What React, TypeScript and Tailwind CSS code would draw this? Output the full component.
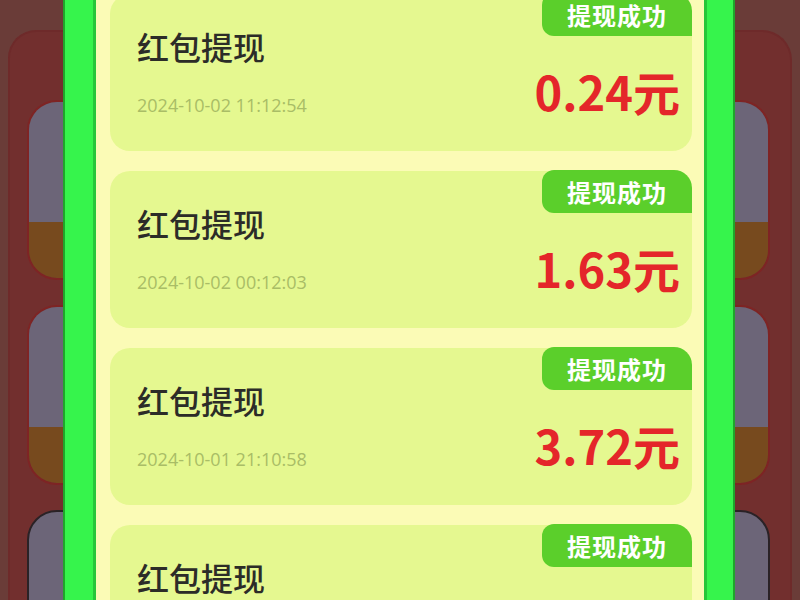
import React from "react";

const records = [
  { date: "2024-10-02 11:12:54", amount: "0.24" },
  { date: "2024-10-02 00:12:03", amount: "1.63" },
  { date: "2024-10-01 21:10:58", amount: "3.72" },
  { date: "2024-10-01 20:45:17", amount: "2.18" },
];

function Pill({ mt }: { mt: string }) {
  return (
    <div className={`${mt} w-[70px] h-[180px] shrink-0 rounded-[30px] border-2 border-[#7e2424] overflow-hidden flex flex-col`}>
      <div className="h-[120px] bg-[#6c6578]" />
      <div className="flex-1 bg-[#774a1e]" />
    </div>
  );
}

function SideLeft() {
  return (
    <div className="w-[63px] h-full overflow-hidden bg-[#6a3c38] shrink-0">
      <div className="ml-[8px] mt-[30px] w-[120px] h-[620px] rounded-tl-[28px] bg-[#722f2e] border-l-2 border-t-2 border-[#6e2a2a] pl-[17px] pt-[68px] flex flex-col">
        <Pill mt="mt-0" />
        <Pill mt="mt-[25px]" />
        <div className="mt-[25px] w-[70px] h-[182px] shrink-0 rounded-[30px] border-2 border-[#2a2226] bg-[#6c6578]" />
      </div>
    </div>
  );
}

function SideRight() {
  return (
    <div className="flex-1 h-full overflow-hidden bg-[#6a3c38] flex justify-end">
      <div className="mt-[30px] mr-[8px] w-[120px] h-[620px] shrink-0 rounded-tr-[30px] bg-[#722f2e] border-r-2 border-t-2 border-[#6e2a2a] pr-[20px] pt-[68px] flex flex-col items-end">
        <Pill mt="mt-0" />
        <Pill mt="mt-[25px]" />
        <div className="mt-[25px] w-[70px] h-[182px] shrink-0 rounded-[30px] border-2 border-[#2a2226] bg-[#6c6578]" />
      </div>
    </div>
  );
}

function Card({ date, amount, first }: { date: string; amount: string; first?: boolean }) {
  return (
    <div className={`${first ? "mt-[-6px]" : ""} relative h-[157px] shrink-0 rounded-[20px] bg-[#e5f890] flex justify-between`}>
      <div className="absolute top-[-1px] right-0 w-[150px] h-[43px] bg-[#5bcf2b] rounded-tl-[12px] rounded-bl-[12px] rounded-tr-[18px] flex items-center justify-center">
        <span className="text-white text-[24px] font-bold tracking-[1px] leading-none" style={{ fontFamily: '"Noto Sans CJK SC", sans-serif' }}>
          提现成功
        </span>
      </div>
      <div className="pl-[27px] pt-[33px] flex flex-col">
        <span className="text-[32px] leading-[38px] font-medium text-[#2c2c28]" style={{ fontFamily: '"Noto Sans CJK SC", sans-serif' }}>
          红包提现
        </span>
        <span className="mt-[28px] text-[18px] leading-[24px] font-medium text-[#a9bd66]" style={{ fontFamily: '"Open Sans", "Noto Sans", sans-serif' }}>
          {date}
        </span>
      </div>
      <div className="pr-[12px] pt-[69px]">
        <span className="text-[47px] leading-[56px] font-bold text-[#e4262a]" style={{ fontFamily: '"Noto Sans CJK SC", sans-serif' }}>
          {amount}元
        </span>
      </div>
    </div>
  );
}

export default function App() {
  return (
    <div className="w-[800px] h-[600px] overflow-hidden flex bg-[#6a3c38]">
      <SideLeft />
      <div className="w-[33px] h-full shrink-0 bg-[#36f44c] border-l-[2px] border-l-[#1fa52b] border-r-[3px] border-r-[#27c63a]" />
      <div className="w-[608px] h-full shrink-0 bg-[#fbfbb6] overflow-hidden pl-[14px] pr-[12px] flex flex-col gap-[20px]">
        {records.map((r, i) => (
          <Card key={i} date={r.date} amount={r.amount} first={i === 0} />
        ))}
      </div>
      <div className="w-[31px] h-full shrink-0 bg-[#36f44c] border-l-[3px] border-l-[#27c63a] border-r-[2px] border-r-[#1fa52b]" />
      <SideRight />
    </div>
  );
}
